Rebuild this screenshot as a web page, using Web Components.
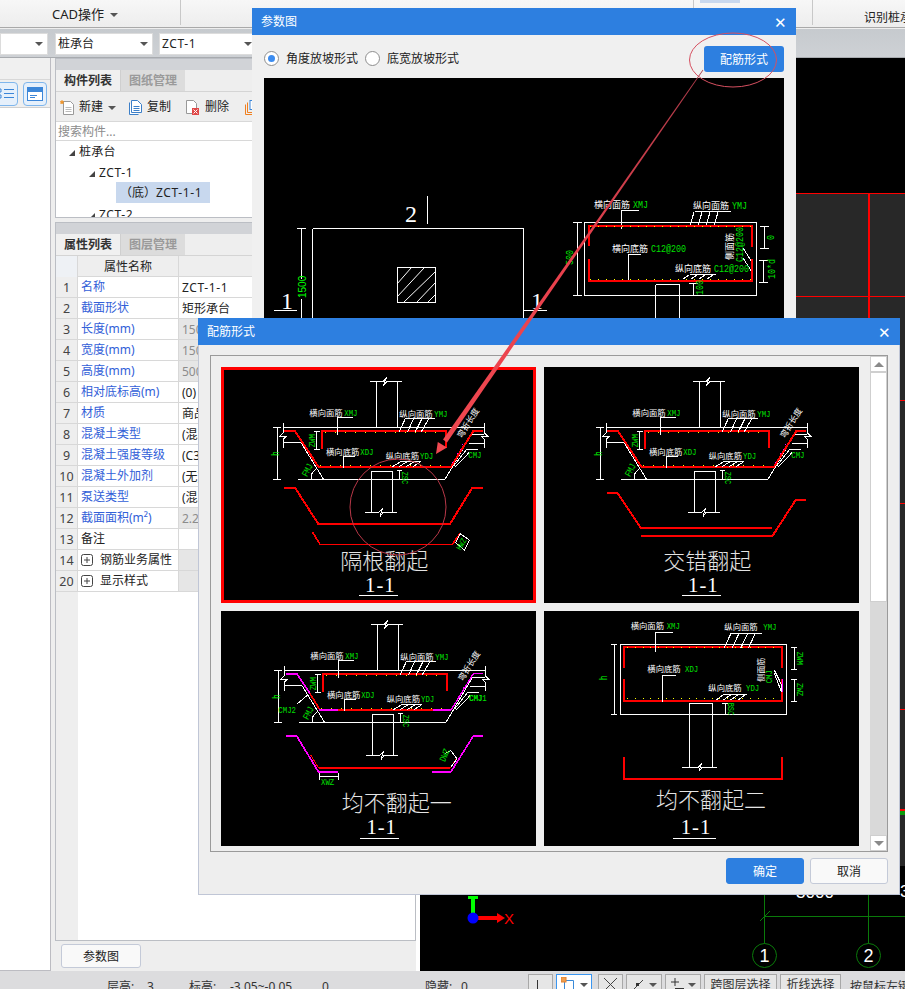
<!DOCTYPE html>
<html lang="zh">
<head>
<meta charset="utf-8">
<title>参数图</title>
<style>
  html, body { margin: 0; padding: 0; }
  body {
    position: relative;
    width: 905px;
    height: 989px;
    overflow: hidden;
    font: 12px/1.2 "Noto Sans", "Noto Sans CJK SC", sans-serif;
    color: #222;
    background: #eee;
  }
</style>
</head>
<body>
<app-shell>
  <app-ribbon slot="ribbon"></app-ribbon>
  <combo-row slot="combos">
    <combo-box style="width:48px"></combo-box>
    <combo-box style="width:98px;margin-left:7px">桩承台</combo-box>
    <combo-box style="width:98px;margin-left:6px"><span style="letter-spacing:.6px">ZCT-1</span></combo-box>
  </combo-row>
  <tool-rail slot="rail"></tool-rail>
  <side-panel slot="panel">
    <panel-tabs first="构件列表" second="图纸管理"></panel-tabs>
    <comp-tools></comp-tools>
    <comp-tree></comp-tree>
    <panel-tabs first="属性列表" second="图层管理" class="lower"></panel-tabs>
    <prop-table>
      <prop-row num="1" kind="link" value="ZCT-1-1" latin>名称</prop-row>
      <prop-row num="2" kind="link" value="矩形承台">截面形状</prop-row>
      <prop-row num="3" kind="link" value="1500" readonly>长度(mm)</prop-row>
      <prop-row num="4" kind="link" value="1500" readonly>宽度(mm)</prop-row>
      <prop-row num="5" kind="link" value="500" readonly>高度(mm)</prop-row>
      <prop-row num="6" kind="link" value="(0)">相对底标高(m)</prop-row>
      <prop-row num="7" kind="link" value="商品混凝土">材质</prop-row>
      <prop-row num="8" kind="link" value="(混凝土20石)">混凝土类型</prop-row>
      <prop-row num="9" kind="link" value="(C30)">混凝土强度等级</prop-row>
      <prop-row num="10" kind="link" value="(无)">混凝土外加剂</prop-row>
      <prop-row num="11" kind="link" value="(混凝土泵)">泵送类型</prop-row>
      <prop-row num="12" kind="link" value="2.25" readonly>截面面积(m²)</prop-row>
      <prop-row num="13" value="">备注</prop-row>
      <prop-row num="14" expand readonly value="">钢筋业务属性</prop-row>
      <prop-row num="20" expand readonly value="">显示样式</prop-row>
    </prop-table>
    <panel-foot></panel-foot>
  </side-panel>
  <cad-canvas slot="canvas"></cad-canvas>
  <status-bar slot="status"></status-bar>
</app-shell>

<param-dialog></param-dialog>

<rebar-dialog>
  <cad-detail kind="geli" selected></cad-detail>
  <cad-detail kind="jiaocuo"></cad-detail>
  <cad-detail kind="jun1"></cad-detail>
  <cad-detail kind="jun2"></cad-detail>
</rebar-dialog>

<mark-overlay></mark-overlay>

<script>
  // helper para crear el shadow root con su markup
  function mount(el, html) {
    el.attachShadow({ mode: 'open' }).innerHTML = html;
  }

  const CAD_CJK = '"Noto Sans CJK SC", sans-serif';
  const CAD_MONO = '"Liberation Mono", monospace';
  const WHITE = '#fff';
  const GREEN = '#00e000';
  const RED = '#f00';
  const PINK = '#f0f';

  function line(points, color = WHITE, width = 3) {
    return `<polyline points="${points}" fill="none" stroke="${color}" stroke-width="${width}"/>`;
  }

  function label(x, y, str, size = 25, color = WHITE, rotate = 0, family = CAD_CJK) {
    const t = rotate ? ` transform="rotate(${rotate} ${x} ${y})"` : '';
    return `<text x="${x}" y="${y}" font-size="${size}" fill="${color}" font-family='${family}'${t}>${str}</text>`;
  }

  // letras verdes altas y estrechas, como las del CAD
  function code(x, y, str, rotate = 0, size = 22, color = GREEN) {
    const t = rotate ? ` transform="rotate(${rotate} ${x} ${y})"` : '';
    const len = (str.length * size * 0.6).toFixed(1);
    return `<text x="${x}" y="${y}" font-size="${(size * 1.3).toFixed(1)}" fill="${color}" font-family='${CAD_MONO}' textLength="${len}" lengthAdjust="spacingAndGlyphs"${t}>${str}</text>`;
  }

  function tiny(x, y, str, rotate = 0) {
    const t = rotate ? ` transform="rotate(${rotate} ${x} ${y})"` : '';
    return `<text x="${x}" y="${y}" font-size="10.500" fill="${GREEN}" font-family='${CAD_MONO}' textLength="${str.length * 5}" lengthAdjust="spacingAndGlyphs"${t}>${str}</text>`;
  }

  function caption(cx, baseline, title, lineCx, ulFrom, ulTo, ulY, numBase) {
    return `<text x="${cx}" y="${baseline}" text-anchor="middle" font-size="66" fill="#e4e4e4" font-weight="300" font-family='${CAD_CJK}'>${title}</text>
      <text x="${lineCx}" y="${numBase}" text-anchor="middle" font-size="62" fill="#fff" font-family='"Liberation Serif", serif' letter-spacing="3">1-1</text>
      ${line(`${ulFrom},${ulY} ${ulTo},${ulY}`)}`;
  }

  // corte de la zapata inclinada, coordenadas del zoom de la primera tarjeta
  function slopedSection(leftBar, rightBar) {
    return `
      ${line('466,65 504,65 515,52 505,76 515,65 560,65')}
      ${line('484,65 484,203')}${line('548,65 548,203')}
      ${line('205,203 808,203')}
      ${line('175,203 197,203')}${line('186,203 186,358')}${line('175,358 197,358')}
      ${line('205,190 205,218 195,228 215,228 205,238 205,265')}
      ${line('205,248 258,248 325,357')}
      ${line('250,358 690,358 770,222 808,222')}
      ${line('808,190 808,218 818,228 798,228 808,238 808,265')}
      ${line('762,250 808,250')}
      ${line('290,358 290,340')}
      <path d="M288,357 A40 40 0 0 1 304,326" fill="none" stroke="#fff" stroke-width="3"/>
      ${code(276, 352, 'FMJ', -62)}
      ${code(191, 288, 'h', -90, 24, '#0f0')}
      ${leftBar}
      ${line('322,268 322,213 692,213 692,265', RED, 6)}
      <line x1="330" y1="217" x2="690" y2="217" stroke="#ff0" stroke-width="3" stroke-dasharray="3 27"/>
      <line x1="315" y1="315" x2="705" y2="315" stroke="#ff0" stroke-width="3" stroke-dasharray="3 27"/>
      <line x1="712" y1="308" x2="745" y2="252" stroke="${PINK}" stroke-width="3" stroke-dasharray="3 12"/>
      ${rightBar}
      ${line('296,213 316,213')}${line('305,213 305,268')}${line('296,268 316,268')}
      ${code(300, 262, 'ZWM', -90)}
      ${label(283, 168, '横向面筋')}${code(388, 169, 'XMJ')}
      ${line('414,172 367,172 367,225')}
      ${label(553, 170, '纵向面筋')}${code(658, 171, 'YMJ')}
      ${line('660,176 570,176')}
      ${line('570,178 552,217')}${line('595,178 577,217')}${line('620,178 600,217')}${line('640,178 618,217')}
      ${label(333, 285, '横向底筋')}${code(436, 286, 'XDJ')}
      ${line('420,290 385,290 385,325')}
      ${label(512, 297, '纵向底筋')}${code(615, 298, 'YDJ')}
      ${line('618,305 555,305')}
      ${line('556,306 532,320')}${line('575,306 552,320')}${line('596,306 574,320')}${line('616,306 594,320')}
      ${code(760, 294, 'CMJ')}
      ${line('790,268 755,268')}
      ${line('755,268 716,318')}${line('762,278 722,320')}
      ${line('553,332 553,358')}${line('545,332 562,332')}
      ${code(560, 335, 'ZSC', 90, 21)}
      ${label(740, 236, '弯折长度', 25, WHITE, -58)}
      ${line('470,358 470,333 533,333 533,358')}
      ${line('470,358 470,457')}${line('533,358 533,457')}
      ${line('451,457 492,457 502,445 495,470 504,457 546,457')}`;
  }

  const RED_TOP_BAR = line('208,213 240,213 310,320 708,320 775,213 805,213', RED, 6);

  class AppShell extends HTMLElement {
    constructor() {
      super();
      mount(this, `
        <style>
          :host {
            display: grid;
            grid-template-columns: 51px 4px 361px 4px 1fr;
            grid-template-rows: 29px 29px 913px 18px;
            width: 905px;
            height: 989px;
            background: #eee;
          }
          .ribbon { grid-column: 1 / -1; }
          .combos { grid-column: 1 / -1; }
          .status { grid-column: 1 / -1; }
          .rail { grid-column: 1; }
          .panel { grid-column: 3; }
          .gap { grid-column: 4; background: #fff; }
          .canvas { grid-column: 5; overflow: hidden; }
        </style>
        <div class="ribbon"><slot name="ribbon"></slot></div>
        <div class="combos"><slot name="combos"></slot></div>
        <div class="rail"><slot name="rail"></slot></div>
        <div class="panel"><slot name="panel"></slot></div>
        <div class="gap"></div>
        <div class="canvas"><slot name="canvas"></slot></div>
        <div class="status"><slot name="status"></slot></div>`);
    }
  }

  class AppRibbon extends HTMLElement {
    constructor() {
      super();
      mount(this, `
        <style>
          :host {
            display: flex;
            height: 28px;
            overflow: hidden;
            box-sizing: border-box;
            background: linear-gradient(#f7f7f7, #ededed);
            border-bottom: 1px solid #a9a9a9;
            white-space: nowrap;
          }
          .sec { position: relative; height: 25px; border-right: 1px solid #c8c8c8; box-sizing: border-box; flex: none; }
          .cad { width: 181px; padding: 7px 0 0 52px; font-size: 13px; }
          .cad i { display: inline-block; margin-left: 6px; border: 4px solid transparent; border-top: 4px solid #555; border-bottom: 0; vertical-align: 2px; }
          .mid { width: 513px; }
          .sel { width: 119px; }
          .sel b { display: block; margin: 0 0 0 6px; width: 40px; height: 3px; background: #c8d8ee; }
          .rec { flex: 1; height: 27px; border: 0; overflow: hidden; }
          .rec span { display: block; margin: -12px 0 0 12px; height: 15px; color: #b0b0b0; }
          .rec em { display: block; font-style: normal; margin: 8px 0 0 51px; }
        </style>
        <div class="sec cad">CAD操作<i></i></div>
        <div class="sec mid"></div>
        <div class="sec sel"><b></b></div>
        <div class="sec rec"><span>桩承台</span><em>识别桩承台</em></div>`);
    }
  }

  class ComboRow extends HTMLElement {
    constructor() {
      super();
      mount(this, `
        <style>
          :host {
            display: flex;
            align-items: flex-start;
            height: 29px;
            padding-top: 4px;
            box-sizing: border-box;
            background: linear-gradient(#c6cace, #ced1d5);
            border-bottom: 1px solid #a8abaf;
          }
        </style>
        <slot></slot>`);
    }
  }

  class ComboBox extends HTMLElement {
    constructor() {
      super();
      mount(this, `
        <style>
          :host {
            display: flex;
            align-items: center;
            justify-content: space-between;
            box-sizing: border-box;
            height: 22px;
            padding: 0 4px 0 2px;
            background: #fff;
            border: 1px solid #dcdcdc;
            flex: none;
          }
          i { border: 4px solid transparent; border-top: 4px solid #555; border-bottom: 0; }
        </style>
        <span><slot></slot></span><i></i>`);
    }
  }

  class ToolRail extends HTMLElement {
    constructor() {
      super();
      mount(this, `
        <style>
          :host {
            display: block;
            height: 913px;
            box-sizing: border-box;
            background: #fff;
            border-right: 1px solid #bcbcc2;
            border-bottom: 1px solid #bcbcc2;
            overflow: hidden;
          }
          .strip { height: 22px; background: #f0f0f0; border-bottom: 1px solid #d8d8d8; box-sizing: border-box; }
          .tools { display: flex; gap: 5px; justify-content: flex-end; align-items: center; height: 27px; padding-right: 3px; background: #efefef; border-bottom: 1px solid #d0d0d0; }
          .btn { width: 24px; height: 24px; box-sizing: border-box; border: 1px solid #7fb6ec; border-radius: 4px; background: #e6f0fb; display: flex; align-items: center; justify-content: center; flex: none; }
        </style>
        <div class="strip"></div>
        <div class="tools">
          <div class="btn">
            <svg width="18" height="14" viewBox="0 0 18 14" fill="none" stroke="#3c86d8"><path d="M1 2h3v3H1zM1 8h3v3H1zM7 2.500h10M7 6.500h10M7 10.500h10"/></svg>
          </div>
          <div class="btn">
            <svg width="16" height="14" viewBox="0 0 16 14"><rect x="0.500" y="0.500" width="15" height="13" fill="#fff" stroke="#3c86d8"/><rect x="1" y="1" width="14" height="4" fill="#3c86d8"/><path d="M3 8.500h7M3 10.500h5" stroke="#3c86d8"/></svg>
          </div>
        </div>`);
    }
  }

  class SidePanel extends HTMLElement {
    constructor() {
      super();
      mount(this, `
        <style>
          :host {
            display: flex;
            flex-direction: column;
            height: 913px;
            background: #eee;
          }
        </style>
        <slot></slot>`);
    }
  }

  class PanelTabs extends HTMLElement {
    constructor() {
      super();
      mount(this, `
        <style>
          :host {
            display: block;
            box-sizing: border-box;
            flex: none;
            border-left: 1px solid #bbbec4;
            border-right: 1px solid #bbbec4;
            background: #eee;
          }
          :host(.lower) { margin-top: 4px; }
          .strip { height: 12px; background: #d1d3d7; border-top: 1px solid #bbbec4; box-sizing: border-box; }
          .tabs { display: flex; height: 22px; border-bottom: 1px solid #d4d4d4; box-sizing: border-box; }
          .tab { width: 64px; line-height: 21px; text-align: center; font-weight: 700; box-sizing: border-box; }
          .on { color: #333; background: #f0f0f0; }
          .off { color: #9a9a9a; background: #dcdcdc; border-left: 1px solid #cfcfcf; width: 65px; }
        </style>
        <div class="strip"></div>
        <div class="tabs">
          <div class="tab on">${this.getAttribute('first')}</div>
          <div class="tab off">${this.getAttribute('second')}</div>
        </div>`);
    }
  }

  class CompTools extends HTMLElement {
    constructor() {
      super();
      mount(this, `
        <style>
          :host {
            display: block;
            flex: none;
            border-left: 1px solid #bbbec4;
            border-right: 1px solid #bbbec4;
            background: #eee;
          }
          .bar { display: flex; align-items: center; height: 30px; padding-top: 2px; border-bottom: 1px solid #d8d8d8; box-sizing: border-box; padding-left: 4px; white-space: nowrap; }
          .item { display: flex; align-items: center; gap: 5px; }
          svg { flex: none; }
          i { display: block; margin: 0 0 0 6px; border: 4px solid transparent; border-top: 4px solid #555; border-bottom: 0; }
          .search { height: 19px; line-height: 20px; background: #fff; color: #8c8c8c; padding-left: 2px; border-bottom: 1px solid #d8d8d8; box-sizing: border-box; }
        </style>
        <div class="bar">
          <div class="item" style="width:69px">
            <svg width="14" height="15" viewBox="0 0 14 15"><path d="M3.500 1.500h7l3 3v10h-10z" fill="#fff" stroke="#999"/><path d="M5.500 7.500h6M5.500 9.500h6M5.500 11.500h6" stroke="#bbb"/><path d="M0 1h4M2 -1v4M0.500 0l3 3M3.500 0l-3 3" stroke="#f09020" transform="translate(0 1)"/></svg>
            <span>新建</span><i style="margin-left:0"></i>
          </div>
          <div class="item" style="width:57px">
            <svg width="13" height="15" viewBox="0 0 13 15" fill="#fff" stroke="#3c7fc8"><path d="M0.500 2.500v12h9"/><path d="M2.500 0.500h6l4 4v8h-10z"/><path d="M4.500 6.500h6M4.500 8.500h6M4.500 10.500h6"/></svg>
            <span>复制</span>
          </div>
          <div class="item" style="width:59px">
            <svg width="14" height="15" viewBox="0 0 14 15"><path d="M0.500 0.500h7l3 3v10h-10z" fill="#fff" stroke="#999"/><rect x="6" y="8" width="7" height="7" fill="#e04848"/><path d="M7.500 9.500l4 4M11.500 9.500l-4 4" stroke="#fff"/></svg>
            <span>删除</span>
          </div>
          <div class="item">
            <svg width="14" height="15" viewBox="0 0 14 15" fill="#fff"><path d="M0.500 4.500v10h9" stroke="#f08020" fill="none"/><path d="M2.500 2.500v10h9" stroke="#f08020" fill="none"/><rect x="5" y="0.500" width="8" height="9" stroke="#3c86d8"/></svg>
          </div>
        </div>
        <div class="search">搜索构件...</div>`);
    }
  }

  class CompTree extends HTMLElement {
    constructor() {
      super();
      mount(this, `
        <style>
          :host {
            display: block;
            flex: none;
            height: 77px;
            overflow: hidden;
            background: #fff;
            border: 1px solid #bbbec4;
            border-top: 0;
            box-sizing: border-box;
            letter-spacing: .3px;
          }
          .node { display: flex; align-items: center; height: 21px; padding-top: 2px; box-sizing: border-box; white-space: nowrap; }
          .tri { width: 0; height: 0; border-left: 6px solid transparent; border-bottom: 6px solid #444; margin-right: 4px; flex: none; }
          .sel { background: #c8d8ee; width: 94px; height: 21px; margin: -2px 0 0 60px; padding: 2px 0 0 4px; box-sizing: border-box; display: flex; align-items: center; letter-spacing: 0; }
          .sel span { letter-spacing: .6px; }
          .lat { letter-spacing: .6px; }
        </style>
        <div class="node" style="padding-left:13px"><span class="tri"></span>桩承台</div>
        <div class="node" style="padding-left:33px"><span class="tri"></span><span class="lat">ZCT-1</span></div>
        <div class="node" style="padding-top:0"><div class="sel">（底）<span>ZCT-1-1</span></div></div>
        <div class="node" style="padding-left:33px"><span class="tri"></span><span class="lat">ZCT-2</span></div>`);
    }
  }

  class PropTable extends HTMLElement {
    constructor() {
      super();
      mount(this, `
        <style>
          :host {
            display: flex;
            flex-direction: column;
            flex: 1;
            min-height: 0;
            background: #fff;
            border: 1px solid #bbbec4;
            border-top: 0;
            position: relative;
          }
          .head { display: grid; grid-template-columns: 22px 101px 1fr; height: 21px; box-sizing: border-box; border-bottom: 1px solid #d8d8d8; background: #eee; text-align: center; line-height: 22px; flex: none; }
          .head div { border-right: 1px solid #d8d8d8; }
          .head .corner { background: #eef1f5; }
          .head .last { border-right: 0; }
          .rows { display: flex; flex-direction: column; flex: 1; background: linear-gradient(90deg, #eee 22px, #fff 22px); }
        </style>
        <div class="head"><div class="corner"></div><div>属性名称</div><div class="last"></div></div>
        <div class="rows"><slot></slot></div>`);
    }
  }

  class PropRow extends HTMLElement {
    constructor() {
      super();
      const link = this.getAttribute('kind') === 'link';
      const expand = this.hasAttribute('expand');
      const plus = `<svg width="12" height="12" viewBox="0 0 12 12"><rect x="0.500" y="0.500" width="11" height="11" rx="2" fill="#fff" stroke="#444"/><path d="M3 6h6M6 3v6" stroke="#444"/></svg>`;
      mount(this, `
        <style>
          :host {
            display: grid;
            grid-template-columns: 22px 101px 1fr;
            height: 21px;
            line-height: 22px;
            box-sizing: border-box;
            border-bottom: 1px solid #d8d8d8;
            flex: none;
            white-space: nowrap;
          }
          div { overflow: hidden; box-sizing: border-box; border-right: 1px solid #d8d8d8; }
          .num { background: #eee; text-align: center; font-size: 12.500px; color: #444; }
          .name { padding-left: 3px; color: ${link ? '#3260d8' : '#222'}; display: flex; align-items: center; }
          .plus { display: flex; margin-right: 7px; margin-top: -1px; }
          .val { padding-left: 3px; border-right: 0; }
          :host([latin]) .val { letter-spacing: .6px; }
          :host([readonly]) .val { background: #e6e6e6; color: #8c8c8c; }
        </style>
        <div class="num">${this.getAttribute('num')}</div>
        <div class="name">${expand ? `<span class="plus">${plus}</span>` : ''}<span><slot></slot></span></div>
        <div class="val">${this.getAttribute('value')}</div>`);
    }
  }

  class PanelFoot extends HTMLElement {
    constructor() {
      super();
      mount(this, `
        <style>
          :host {
            display: flex;
            flex: none;
            height: 30px;
            align-items: center;
            padding-left: 6px;
            background: #eee;
          }
          .btn {
            width: 80px;
            height: 24px;
            line-height: 24px;
            box-sizing: border-box;
            text-align: center;
            background: #f9f9f9;
            border: 1px solid #c4cad8;
            border-radius: 3px;
          }
        </style>
        <div class="btn">参数图</div>`);
    }
  }

  class CadCanvas extends HTMLElement {
    constructor() {
      super();
      mount(this, `
        <style>
          :host { display: block; width: 485px; height: 913px; background: #000; }
          svg { display: block; }
        </style>
        <svg width="485" height="913" viewBox="420 58 485 913" shape-rendering="crispEdges">
          <rect x="420" y="58" width="485" height="913" fill="#000"/>
          <rect x="700" y="193" width="205" height="705" fill="#282828"/>
          <path d="M700 193.500H905M700 296.500H905M700 400.500H905M700 503.500H905M700 709.500H905" stroke="#f00" fill="none"/>
          <path d="M868.500 193V400" stroke="#f00" stroke-width="2"/>
          <path d="M700 810H905" stroke="#f00" stroke-width="2"/>
          <path d="M700 813H905" stroke="#0a9a0a" stroke-width="4"/>
          <rect x="420" y="866" width="485" height="105" fill="#000"/>
          <path d="M764.500 866V967M868.500 866V967M764 916.500H905M760 921L770 911" stroke="#0a7a0a" fill="none"/>
          <circle cx="764.500" cy="955.500" r="12" fill="#000" stroke="#0a7a0a" shape-rendering="auto"/>
          <circle cx="868.500" cy="955.500" r="12" fill="#000" stroke="#0a7a0a" shape-rendering="auto"/>
          <text x="764.500" y="962" text-anchor="middle" font-size="18" fill="#fff" font-family='"Liberation Sans", sans-serif'>1</text>
          <text x="868.500" y="962" text-anchor="middle" font-size="18" fill="#fff" font-family='"Liberation Sans", sans-serif'>2</text>
          <text x="815" y="898" text-anchor="middle" font-size="17" fill="#fff" font-family='"Liberation Sans", sans-serif'>3000</text>
          <text x="900" y="897" font-size="17" fill="#fff" font-family='"Liberation Sans", sans-serif'>3</text>
          <rect x="471" y="896" width="4" height="17" fill="#0f0"/>
          <rect x="468" y="896" width="10" height="3" fill="#0f0"/>
          <rect x="478" y="916" width="20" height="4" fill="#f00"/>
          <path d="M497 913L505 918L497 923z" fill="#f00" shape-rendering="auto"/>
          <circle cx="473" cy="918" r="5.500" fill="#00f" shape-rendering="auto"/>
          <text x="504" y="924" font-size="15" fill="#f00" font-family='"Liberation Sans", sans-serif'>X</text>
        </svg>`);
    }
  }

  class StatusBar extends HTMLElement {
    constructor() {
      super();
      mount(this, `
        <style>
          :host {
            display: flex;
            position: relative;
            height: 18px;
            overflow: hidden;
            background: #dcdcde;
            color: #333;
            white-space: nowrap;
          }
          .txt { display: flex; padding: 9px 0 0 107px; height: 30px; width: 528px; flex: none; box-sizing: border-box; }
          .tools { display: flex; gap: 3px; padding-top: 3px; }
          .btn { flex: none; height: 28px; box-sizing: border-box; border: 1px solid #a8a8a8; background: #e6e6e6; display: flex; padding: 2px 0 0 4px; }
          .sel { border-color: #3a96f0; background: #fff; }
          .cap { padding: 3px 0 0; text-align: center; display: block; }
          i { display: block; margin: 6px 0 0 4px; border: 4px solid transparent; border-top: 4px solid #555; border-bottom: 0; height: 0; }
          .end { padding: 6px 0 0 6px; }
        </style>
        <div class="txt">
          <span style="width:40px">层高:</span><span style="width:42px">3</span>
          <span style="width:41px">标高:</span><span style="width:92px">-3.05~-0.05</span>
          <span style="width:103px">0</span>
          <span style="width:36px">隐藏:</span><span>0</span>
        </div>
        <div class="tools">
          <div class="btn" style="width:25px"><svg width="14" height="14"><path d="M4.500 3v10h6" fill="none" stroke="#333"/></svg></div>
          <div class="btn sel" style="width:36px"><svg width="14" height="14"><path d="M3.500 3.500h9v10M3.500 3.500v10" fill="none" stroke="#3a8ad8"/><rect x="0" y="0" width="5" height="5" fill="#f0a050" stroke="#e08030"/></svg><i style="margin-left:5px"></i></div>
          <div class="btn" style="width:25px;margin-left:3px"><svg width="15" height="14"><path d="M1 1l13 13M14 1L1 14" stroke="#444"/></svg></div>
          <div class="btn" style="width:36px"><svg width="14" height="14"><path d="M2 13L12 3" stroke="#444"/><rect x="5" y="6" width="3" height="3" fill="#333"/></svg><i></i></div>
          <div class="btn" style="width:36px"><svg width="14" height="14"><path d="M1 5h8M5 1v8M5 11.500h9" stroke="#333" fill="none"/></svg><i></i></div>
          <div class="btn cap" style="width:73px">跨图层选择</div>
          <div class="btn cap" style="width:61px">折线选择</div>
          <div class="end">按鼠标左键</div>
        </div>`);
    }
  }

  class ParamDialog extends HTMLElement {
    constructor() {
      super();
      mount(this, `
        <style>
          :host {
            position: absolute;
            left: 252px;
            top: 8px;
            width: 544px;
            height: 322px;
            display: flex;
            flex-direction: column;
            background: #f0f0f0;
          }
          .title { display: flex; align-items: center; justify-content: space-between; height: 27px; padding: 1px 9px 0; box-sizing: border-box; background: #2d7fe0; color: #fff; flex: none; }
          .close { font-size: 15px; line-height: 1; }
          .opts { display: flex; align-items: center; height: 43px; padding: 3px 12px 0; box-sizing: border-box; flex: none; }
          .radio { width: 15px; height: 15px; box-sizing: border-box; border: 1px solid #8e8e8e; border-radius: 50%; background: #fff; margin-right: 7px; flex: none; display: flex; align-items: center; justify-content: center; }
          .radio b { width: 7px; height: 7px; border-radius: 50%; background: #3c8cf0; }
          .lab { margin-right: 7px; padding-top: 2px; }
          .btn { margin-left: auto; width: 80px; height: 26px; line-height: 27px; margin-top: 2px; background: #2d7fe0; border-radius: 3px; color: #fff; text-align: right; padding-right: 16px; box-sizing: border-box; }
          .draw { display: block; margin-left: 12px; flex: none; }
        </style>
        <div class="title"><span>参数图</span><span class="close">✕</span></div>
        <div class="opts">
          <span class="radio"><b></b></span><span class="lab">角度放坡形式</span>
          <span class="radio"></span><span class="lab">底宽放坡形式</span>
          <span class="btn">配筋形式</span>
        </div>
        <svg class="draw" width="520" height="252" viewBox="264 78 520 252" shape-rendering="crispEdges">
          <rect x="264" y="78" width="520" height="252" fill="#000"/>
          <g fill="none" stroke="#fff" stroke-width="1">
            <path d="M312.500 228.500H523.500M312.500 228.500V330M523.500 228.500V330"/>
            <path d="M427.500 196V224"/>
            <path d="M301.500 229V330M297 228.500H306"/>
            <path d="M274 310.500H297M524 310.500H547"/>
            <rect x="397.500" y="267.500" width="38" height="35"/>
            <path d="M397 284L411 268M397 297L424 268M404 302L435 272M417 302L435 283M428 302L435 295" shape-rendering="auto"/>
            <rect x="584.500" y="222.500" width="172" height="73"/>
            <path d="M577.500 222V295M573 222.500H582M573 295.500H582"/>
            <path d="M655.500 284.500H679.500M655.500 284.500V330M679.500 284.500V330"/>
            <path d="M693.500 283V295M689 283.500H698"/>
            <path d="M764.500 226V248M760 226.500H769M760 248.500H769"/>
            <path d="M763.500 260V282M759 260.500H768M759 282.500H768"/>
            <path d="M639 210.500H621.500V229M731 211.500H695M694 212L690 226M702 212L698 226M710 212L706 226M718 212L714 226"/>
            <path d="M641 254.500H628.500V282M716 274.500H690M689 275L683 279M697 275L691 279M705 275L699 279M713 275L707 279"/>
            <path d="M743 248L752 262M743 258L752 272"/>
          </g>
          <path d="M589 246V225.500H752V247M589 259V281H752V259" fill="none" stroke="#f00" stroke-width="2"/>
          <line x1="590" y1="226.500" x2="752" y2="226.500" stroke="#ff0" stroke-dasharray="1 7"/>
          <line x1="590" y1="279.500" x2="752" y2="279.500" stroke="#ff0" stroke-dasharray="1 7"/>
          <text x="405" y="222" font-size="24" fill="#fff" font-family='"Liberation Serif", serif'>2</text>
          <text x="281" y="309" font-size="24" fill="#fff" font-family='"Liberation Serif", serif'>1</text>
          <text x="531" y="309" font-size="24" fill="#fff" font-family='"Liberation Serif", serif'>1</text>
          <rect x="297" y="279" width="10" height="20" fill="#000"/>
          <text transform="translate(306 298) rotate(-90)" font-size="10" fill="#0f0" font-family='"Liberation Sans", sans-serif'>1500</text>
          ${tiny(573, 265, '500', -90)}
          ${tiny(633, 208, 'XMJ')}
          ${tiny(732, 209, 'YMJ')}
          ${tiny(651, 252, 'C12@200')}
          ${tiny(714, 272, 'C12@200')}
          ${tiny(743, 262, 'C12@200', -90)}
          ${tiny(703, 295, '100', -90)}
          ${tiny(774, 240, '0', -90)}
          ${tiny(775, 279, '10*d', -90)}
          <g font-family='"Noto Sans CJK SC", sans-serif' font-size="9" fill="#fff">
            <text x="594" y="208">横向面筋</text>
            <text x="693" y="209">纵向面筋</text>
            <text x="612" y="252">横向底筋</text>
            <text x="675" y="272">纵向底筋</text>
            <text transform="translate(733 260) rotate(-90)">侧面筋</text>
          </g>
        </svg>`);
    }
  }

  class RebarDialog extends HTMLElement {
    constructor() {
      super();
      mount(this, `
        <style>
          :host {
            position: absolute;
            left: 198px;
            top: 318px;
            width: 702px;
            height: 577px;
            display: flex;
            flex-direction: column;
            box-sizing: border-box;
            background: #eee;
            border: 1px solid #c0c6d6;
            border-top: 0;
          }
          .title { display: flex; align-items: center; justify-content: space-between; height: 27px; margin: 0 -1px; padding: 1px 9px 0; box-sizing: border-box; background: #2d7fe0; color: #fff; flex: none; }
          .close { font-size: 15px; line-height: 1; }
          .frame { display: flex; margin: 10px 11px 0; height: 497px; box-sizing: border-box; border: 1px solid #9a9a9a; flex: none; }
          .grid { display: grid; grid-template-columns: 315px 315px; grid-template-rows: 236px 235px; gap: 8px; padding: 11px 11px 0 10px; flex: none; }
          .scroll { width: 17px; display: flex; flex-direction: column; background: #d9d9d9; flex: none; }
          .arrow { height: 16px; background: #fff; border: 1px solid #cfcfcf; box-sizing: border-box; display: flex; align-items: center; justify-content: center; flex: none; }
          .up { border-bottom: 5px solid #8a8a8a; border-left: 5px solid transparent; border-right: 5px solid transparent; }
          .down { border-top: 5px solid #8a8a8a; border-left: 5px solid transparent; border-right: 5px solid transparent; }
          .thumb { height: 230px; background: #fff; border: 1px solid #cfcfcf; box-sizing: border-box; flex: none; }
          .fill { flex: 1; }
          .foot { display: flex; justify-content: flex-end; gap: 6px; padding: 6px 11px 0 0; }
          .btn { width: 78px; height: 26px; line-height: 26px; box-sizing: border-box; text-align: center; border-radius: 3px; }
          .ok { background: #2d7fe0; color: #fff; border: 1px solid #2d7fe0; }
          .no { background: #f9f9f9; border: 1px solid #c4cad8; }
        </style>
        <div class="title"><span>配筋形式</span><span class="close">✕</span></div>
        <div class="frame">
          <div class="grid"><slot></slot></div>
          <div class="scroll">
            <div class="arrow"><span class="up"></span></div>
            <div class="thumb"></div>
            <div class="fill"></div>
            <div class="arrow"><span class="down"></span></div>
          </div>
        </div>
        <div class="foot"><div class="btn ok">确定</div><div class="btn no">取消</div></div>`);
    }
  }

  class CadDetail extends HTMLElement {
    constructor() {
      super();
      const kind = this.getAttribute('kind');
      const d = CadDetail.drawings[kind];
      mount(this, `
        <style>
          :host { display: block; background: #000; position: relative; overflow: hidden; }
          :host([selected]) { outline: 3px solid #f00; outline-offset: -3px; }
          svg { display: block; width: 100%; height: 100%; }
        </style>
        <svg viewBox="${d.view}" preserveAspectRatio="none" shape-rendering="crispEdges">${d.body}</svg>`);
    }
  }

  CadDetail.drawings = {
    geli: {
      view: '18 21 945 708',
      body: `
        ${slopedSection(RED_TOP_BAR, '')}
        ${line('208,383 240,383 310,492 705,492 772,383 803,383', RED, 6)}
        ${line('292,515 315,553 712,553 735,521', RED, 5)}
        ${line('722,548 735,521 763,540 748,570 722,548')}
        ${code(737, 572, 'HWZ', -60, 20)}
        ${caption(508, 628, '隔根翻起', 496, 432, 549, 706, 695)}`
    },
    jiaocuo: {
      view: '12 21 945 708',
      body: `
        <g transform="translate(-6 0)">${slopedSection(RED_TOP_BAR, '')}</g>
        ${line('202,398 232,398 303,505 695,505', RED, 6)}
        ${line('303,527 698,527 767,420 797,420', RED, 6)}
        ${caption(502, 628, '交错翻起', 490, 426, 543, 706, 695)}`
    },
    jun1: {
      view: '18 18 945 705',
      body: `
        <g transform="translate(3 -6)">
          ${slopedSection(
            line('310,320 705,320', RED, 6) +
            line('210,212 242,212 282,272', PINK, 5) + line('282,272 310,318', RED, 5) +
            line('310,320 367,320', PINK, 5) + line('650,320 706,320', PINK, 5),
            line('706,320 772,212 802,212', PINK, 4))}
        </g>
        ${code(190, 323, 'CMJ2')}
        ${line('245,298 280,268')}
        ${code(762, 289, 'CMJ1')}
        ${line('213,393 245,393 310,500 368,500', PINK, 5)}
        ${line('312,489 705,489', RED, 6)}
        ${line('287,450 310,488', RED, 3)}
        ${line('652,500 708,500 775,393 803,393', PINK, 5)}
        ${line('705,490 725,460', RED, 3)}
        ${line('690,445 708,437 726,462 708,485')}
        ${code(690, 472, 'DWZ', -68)}
        ${line('313,505 313,525')}${line('370,505 370,525')}${line('313,515 370,515')}
        ${code(318, 541, 'XWZ')}
        ${caption(545, 618, '均不翻起一', 500, 435, 552, 700, 688)}`
    },
    jun2: {
      view: '12 18 945 705',
      body: `
        <rect x="241.500" y="118.500" width="498" height="210" fill="none" stroke="#fff" stroke-width="3"/>
        ${line('213,118 232,118')}${line('222,118 222,328')}${line('213,328 232,328')}
        ${code(202, 226, 'h', -90, 24, '#0f0')}
        ${line('252,188 252,127 727,127 727,190', RED, 6)}
        ${line('252,222 252,287 727,287 727,222', RED, 6)}
        <line x1="262" y1="128" x2="720" y2="128" stroke="#ff0" stroke-width="3" stroke-dasharray="3 20"/>
        <line x1="262" y1="280" x2="720" y2="280" stroke="#ff0" stroke-width="3" stroke-dasharray="3 20"/>
        ${label(272, 71, '横向面筋')}${code(380, 72, 'XMJ')}
        ${line('398,83 347,83 347,140')}
        ${label(553, 74, '纵向面筋')}${code(670, 75, 'YMJ')}
        ${line('665,85 570,85')}
        ${line('572,87 552,130')}${line('596,87 576,130')}${line('622,87 602,130')}${line('645,87 625,130')}
        ${label(322, 201, '横向底筋')}${code(435, 202, 'XDJ')}
        ${line('408,211 367,211 367,292')}
        ${label(505, 257, '纵向底筋')}${code(618, 258, 'YDJ')}
        ${line('622,267 550,267')}
        ${line('552,268 528,285')}${line('574,268 550,285')}${line('596,268 572,285')}${line('618,268 594,285')}
        ${label(672, 230, '侧面筋', 24, WHITE, -90)}
        ${code(696, 235, 'CMJ', -90)}
        ${line('703,195 725,240 725,262')}${line('703,205 725,262')}
        ${line('728,222 728,262', PINK, 3)}
        ${line('752,127 772,127')}${line('762,127 762,193')}${line('752,193 772,193')}
        ${code(772, 140, 'ZWM', 90)}
        ${line('752,223 772,223')}${line('762,223 762,290')}${line('752,290 772,290')}
        ${code(772, 234, 'ZWZ', 90)}
        ${line('448,487 448,295 518,295 518,487')}
        ${line('427,487 475,487 484,475 478,498 486,487 530,487')}
        ${line('555,295 555,328')}${line('545,295 565,295')}
        ${code(565, 293, 'BSC', 90, 21)}
        ${line('252,457 252,521 727,521 727,457', RED, 6)}
        ${caption(513, 610, '均不翻起二', 468, 399, 528, 700, 688)}`
    }
  };

  // anotaciones rojas encima de todo
  class MarkOverlay extends HTMLElement {
    constructor() {
      super();
      mount(this, `
        <style>
          :host { position: absolute; left: 0; top: 0; width: 905px; height: 989px; pointer-events: none; }
          svg { display: block; }
        </style>
        <svg width="905" height="989" viewBox="0 0 905 989">
          <defs>
            <linearGradient id="shaft" gradientUnits="userSpaceOnUse" x1="703" y1="70" x2="445" y2="441">
              <stop offset="0" stop-color="#a83a48"/>
              <stop offset="0.5" stop-color="#e8404c"/>
              <stop offset="1" stop-color="#f04850"/>
            </linearGradient>
          </defs>
          <ellipse cx="733" cy="60" rx="43.500" ry="27" fill="none" stroke="#d65060"/>
          <circle cx="398" cy="507" r="48" fill="none" stroke="#b83848"/>
          <polygon points="703.300,70.200 702.700,69.800 443,439.600 447,442.400" fill="url(#shaft)"/>
          <polygon points="436,454 437.800,442 447,447.500" fill="#f04850"/>
        </svg>`);
    }
  }

  customElements.define('app-shell', AppShell);
  customElements.define('app-ribbon', AppRibbon);
  customElements.define('combo-row', ComboRow);
  customElements.define('combo-box', ComboBox);
  customElements.define('tool-rail', ToolRail);
  customElements.define('side-panel', SidePanel);
  customElements.define('panel-tabs', PanelTabs);
  customElements.define('comp-tools', CompTools);
  customElements.define('comp-tree', CompTree);
  customElements.define('prop-table', PropTable);
  customElements.define('prop-row', PropRow);
  customElements.define('panel-foot', PanelFoot);
  customElements.define('cad-canvas', CadCanvas);
  customElements.define('status-bar', StatusBar);
  customElements.define('param-dialog', ParamDialog);
  customElements.define('rebar-dialog', RebarDialog);
  customElements.define('cad-detail', CadDetail);
  customElements.define('mark-overlay', MarkOverlay);
</script>
</body>
</html>
